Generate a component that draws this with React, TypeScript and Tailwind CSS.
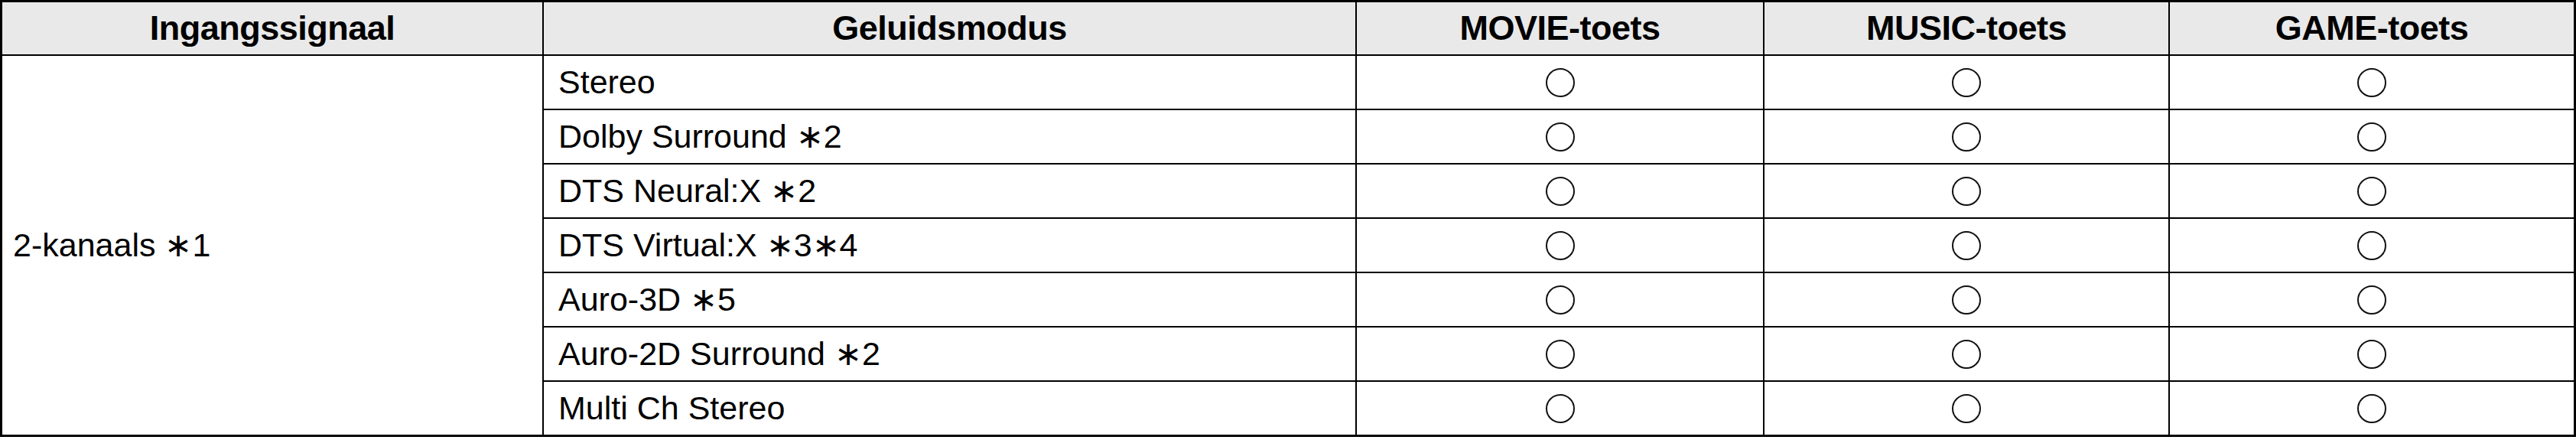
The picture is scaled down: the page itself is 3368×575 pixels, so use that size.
const modes = [
  "Stereo",
  "Dolby Surround ∗2",
  "DTS Neural:X ∗2",
  "DTS Virtual:X ∗3∗4",
  "Auro-3D ∗5",
  "Auro-2D Surround ∗2",
  "Multi Ch Stereo",
];

const headers = ["Ingangssignaal", "Geluidsmodus", "MOVIE-toets", "MUSIC-toets", "GAME-toets"];

function Circle() {
  return <div className="w-[38px] h-[38px] rounded-full border-2 border-[#111]" />;
}

export default function App() {
  return (
    <div className="w-[3368px] h-[575px] bg-white font-['Liberation_Sans',Arial,sans-serif] text-black">
      <div className="w-[3368px] border-[3px] border-black bg-black grid grid-cols-[706px_1061px_531px_528px_528px] grid-rows-[68px_repeat(7,69px)] gap-[2px]">
        {headers.map((h) => (
          <div
            key={h}
            className="bg-[#e9e9e9] flex items-center justify-center font-bold text-[45px] tracking-[-0.5px]"
          >
            {h}
          </div>
        ))}
        <div className="row-span-7 bg-white flex items-center pl-[14px] text-[43px]">2-kanaals ∗1</div>
        {modes.map((m) => (
          <div key={m} className="contents">
            <div className="bg-white flex items-center pl-[19px] text-[43px]">{m}</div>
            <div className="bg-white flex items-center justify-center">
              <Circle />
            </div>
            <div className="bg-white flex items-center justify-center">
              <Circle />
            </div>
            <div className="bg-white flex items-center justify-center">
              <Circle />
            </div>
          </div>
        ))}
      </div>
    </div>
  );
}
